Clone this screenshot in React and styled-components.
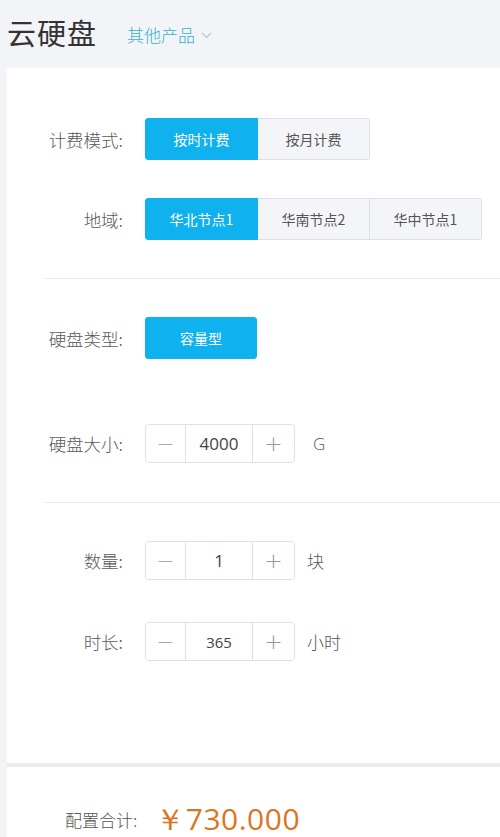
import React from 'react';
import styled, { createGlobalStyle } from 'styled-components';

const GlobalStyle = createGlobalStyle`
  html, body {
    margin: 0;
    padding: 0;
    background: #f3f4f8;
    font-family: "Noto Sans CJK SC", "Noto Sans", sans-serif;
  }
`;

const Page = styled.div`
  width: 500px;
  height: 837px;
  overflow: hidden;
  background: #f3f4f8;
`;

const Header = styled.header`
  height: 68px;
  display: flex;
  align-items: center;
  padding-left: 7px;
  box-sizing: border-box;
`;

const Title = styled.h1`
  margin: 0 0 4px;
  font-size: 29px;
  font-weight: 400;
  color: #333;
  letter-spacing: 1px;
`;

const ProductMenu = styled.div`
  display: flex;
  align-items: center;
  gap: 6px;
  margin-left: 30px;
  font-size: 17px;
  font-weight: 300;
  color: #34b2c8;

  svg {
    margin-top: 2px;
  }
`;

const Panel = styled.main`
  margin-left: 7px;
  background: #ffffff;
  height: 695px;
  padding-top: 50px;
  box-sizing: border-box;
`;

const Section = styled.section`
  display: flex;
  flex-direction: column;
  gap: ${p => p.gap}px;
  padding: ${p => p.top}px 0 ${p => p.bottom}px;
`;

const Divider = styled.hr`
  margin: 0 0 0 38px;
  border: 0;
  border-top: 1px solid #e8e9ee;
`;

const Row = styled.div`
  display: flex;
  align-items: center;
`;

const Label = styled.span`
  width: 116px;
  text-align: right;
  font-size: 17.5px;
  font-weight: 300;
  color: #5a5a5a;
  margin-right: 22px;
  white-space: nowrap;
`;

const ButtonGroup = styled.div`
  display: flex;
`;

const Option = styled.button`
  width: ${p => p.w || 113}px;
  height: 42px;
  margin-left: -1px;
  border: 1px solid ${p => (p.active ? '#0fb1ef' : '#dcdfe6')};
  background: ${p => (p.active ? '#0fb1ef' : '#f4f5f8')};
  color: ${p => (p.active ? '#ffffff' : '#555')};
  font-family: inherit;
  font-size: 14px;
  padding: 0;
  position: relative;
  z-index: ${p => (p.active ? 1 : 0)};

  &:first-child {
    margin-left: 0;
    border-radius: 3px 0 0 3px;
  }
  &:last-child {
    border-radius: 0 3px 3px 0;
  }
  &:only-child {
    border-radius: 3px;
  }
`;

const Stepper = styled.div`
  display: flex;
  height: 39px;
  border: 1px solid #dfe1e6;
  border-radius: 4px;
  box-sizing: border-box;
`;

const StepButton = styled.button`
  width: ${p => p.w}px;
  border: 0;
  background: #fff;
  color: #999;
  font-size: 22px;
  font-weight: 300;
  font-family: "DejaVu Sans", sans-serif;
  padding: 0;
  border-radius: 4px;
`;

const StepValue = styled.div`
  width: 68px;
  box-sizing: border-box;
  border-left: 1px solid #dfe1e6;
  border-right: 1px solid #dfe1e6;
  display: flex;
  align-items: center;
  justify-content: center;
  font-size: ${p => (p.small ? 15 : 17)}px;
  color: #444;
  font-family: "Open Sans", sans-serif;
`;

const Unit = styled.span`
  margin-left: ${p => p.offset || 12}px;
  font-size: 17px;
  font-weight: 300;
  color: #555;
  font-family: "Open Sans", "Noto Sans CJK SC", sans-serif;
`;

const Footer = styled.footer`
  margin-left: 7px;
  background: #fff;
  border-top: 4px solid #ececef;
  height: 74px;
  display: flex;
  align-items: center;
  padding: 34px 0 0 58px;
  box-sizing: border-box;
`;

const TotalLabel = styled.span`
  font-size: 17px;
  font-weight: 300;
  color: #555;
`;

const TotalPrice = styled.span`
  margin-left: 18px;
  font-size: 30px;
  color: #de7420;
  font-family: "Open Sans", sans-serif;
  letter-spacing: 0.5px;
`;

function Chevron() {
  return (
    <svg width="11" height="7" viewBox="0 0 11 7" fill="none">
      <path d="M1 1l4.5 4.5L10 1" stroke="#9fcfd8" strokeWidth="1.2" />
    </svg>
  );
}

function NumberInput({ value, small }) {
  return (
    <Stepper>
      <StepButton w={39}>−</StepButton>
      <StepValue small={small}>{value}</StepValue>
      <StepButton w={41}>+</StepButton>
    </Stepper>
  );
}

export default function App() {
  return (
    <Page>
      <GlobalStyle />
      <Header>
        <Title>云硬盘</Title>
        <ProductMenu>
          其他产品 <Chevron />
        </ProductMenu>
      </Header>

      <Panel>
        <Section gap={38} top={0} bottom={38}>
          <Row>
            <Label>计费模式:</Label>
            <ButtonGroup>
              <Option active>按时计费</Option>
              <Option>按月计费</Option>
            </ButtonGroup>
          </Row>
          <Row>
            <Label>地域:</Label>
            <ButtonGroup>
              <Option active>华北节点1</Option>
              <Option>华南节点2</Option>
              <Option>华中节点1</Option>
            </ButtonGroup>
          </Row>
        </Section>
        <Divider />
        <Section gap={65} top={38} bottom={39}>
          <Row>
            <Label>硬盘类型:</Label>
            <ButtonGroup>
              <Option active w={112}>容量型</Option>
            </ButtonGroup>
          </Row>
          <Row>
            <Label>硬盘大小:</Label>
            <NumberInput value="4000" />
            <Unit offset={18}>G</Unit>
          </Row>
        </Section>
        <Divider />
        <Section gap={42} top={38} bottom={0}>
          <Row>
            <Label>数量:</Label>
            <NumberInput value="1" />
            <Unit>块</Unit>
          </Row>
          <Row>
            <Label>时长:</Label>
            <NumberInput value="365" small />
            <Unit>小时</Unit>
          </Row>
        </Section>
      </Panel>

      <Footer>
        <TotalLabel>配置合计:</TotalLabel>
        <TotalPrice>￥730.000</TotalPrice>
      </Footer>
    </Page>
  );
}
